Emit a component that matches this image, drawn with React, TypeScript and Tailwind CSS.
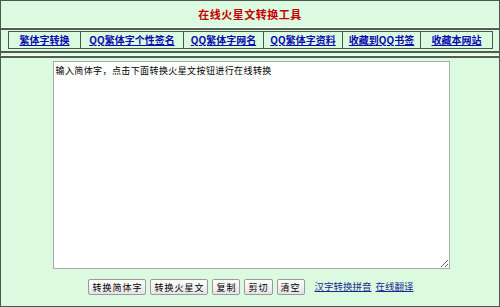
import React from "react";

const navItems = [
  { t: "繁体字转换", w: "w-[71px]" },
  { t: "QQ繁体字个性签名", w: "w-[103px]" },
  { t: "QQ繁体字网名", w: "w-[80px]" },
  { t: "QQ繁体字资料", w: "w-[79px]" },
  { t: "收藏到QQ书签", w: "w-[78px]" },
  { t: "收藏本网站", w: "flex-1" },
];

const buttons = ["转换简体字", "转换火星文", "复制", "剪切", "清空"];

export default function App() {
  return (
    <div
      className="w-[500px] h-[307px] bg-[#dcfadf] border border-[#4a5a4a] flex flex-col overflow-hidden"
      style={{ fontFamily: '"Noto Sans CJK SC", "Liberation Sans", sans-serif' }}
    >
      {/* header */}
      <div className="h-[27px] flex items-center justify-center border-b border-white">
        <span className="text-[11px] font-bold text-[#c40000] tracking-[0.5px]">在线火星文转换工具</span>
      </div>
      <div className="h-[2px] bg-[#4f5f4f]" />
      {/* nav */}
      <div className="px-[7px] pt-[1px] pb-[2px]">
        <div className="flex h-[18px] border border-[#4a5a4a] w-[485px]">
          {navItems.map((n, i) => (
            <div
              key={n.t}
              className={`${n.w} flex items-center justify-center ${i > 0 ? "border-l border-[#4a5a4a]" : ""}`}
            >
              <a className="text-[10px] leading-none font-bold text-[#0a0ab0] underline cursor-pointer">{n.t}</a>
            </div>
          ))}
        </div>
      </div>
      <div className="h-[2px] bg-[#4f5f4f]" />
      <div className="h-[3px] border-b border-white" />
      <div className="h-[2px] bg-[#4f5f4f]" />
      {/* textarea */}
      <div className="flex justify-center pt-[3px]">
        <textarea
          className="w-[397px] h-[208px] ml-[2px] bg-white border border-[#a9a9a9] text-[9px] leading-[12px] tracking-[0.4px] text-black px-[2px] pt-[3px] resize-y outline-none"
          style={{ fontFamily: '"Noto Sans CJK SC", sans-serif' }}
          defaultValue="输入简体字，点击下面转换火星文按钮进行在线转换"
        />
      </div>
      {/* buttons */}
      <div className="flex items-center justify-center gap-[4px] mt-[10px] pl-[2px]">
        {buttons.map((b) => (
          <button
            key={b}
            className="h-[16px] px-[3px] text-[9px] leading-none tracking-[1px] text-black bg-gradient-to-b from-white to-[#e4e4e4] border border-[#9a9a9a] rounded-[2px]"
          >
            {b}
          </button>
        ))}
        <a className="ml-[6px] text-[9.5px] leading-none text-[#1a2a90] underline">汉字转换拼音</a>
        <a className="text-[9.5px] leading-none text-[#1a2a90] underline">在线翻译</a>
      </div>
    </div>
  );
}
